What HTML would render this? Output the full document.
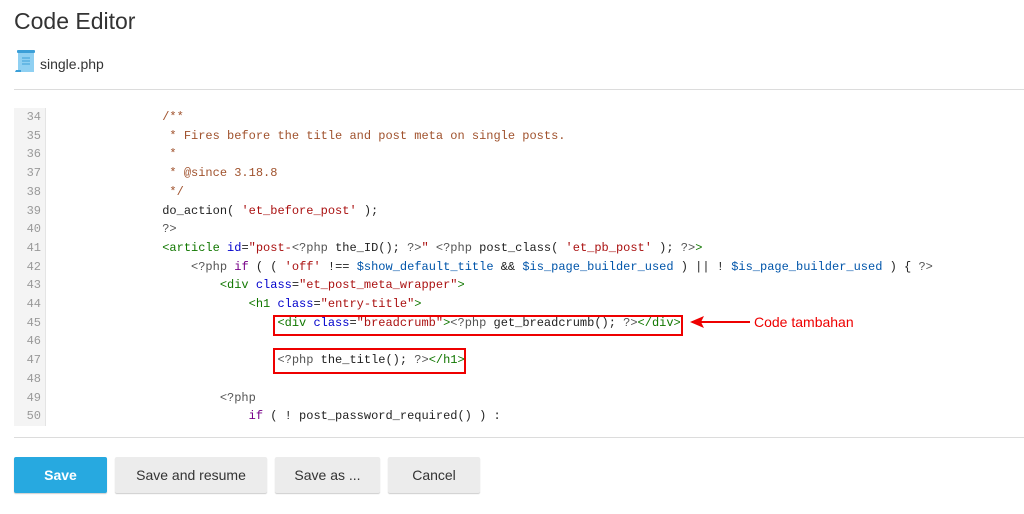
<!DOCTYPE html>
<html><head><meta charset="utf-8"><style>
body{margin:0;background:#fff;width:1024px;height:514px;overflow:hidden;font-family:"Liberation Sans",sans-serif;position:relative}
.t{position:absolute;left:14px;top:8px;font-size:23px;color:#333}
.f{position:absolute;left:40px;top:56px;font-size:14px;color:#333}
.hr{position:absolute;left:14px;width:1010px;height:1px;background:#dcdcdc}
.gut{position:absolute;left:14px;top:108px;width:31px;height:318px;background:#f4f4f4;border-right:1px solid #e4e4e4}
.code{position:absolute;left:0;top:108px;font-family:"Liberation Mono",monospace;font-size:12px;line-height:18.7px;white-space:pre;color:#222}
.ln{display:inline-block;width:41px;text-align:right;color:#999;padding-right:6px}
.c{color:#a0522d}.g{color:#170}.a{color:#00c}.s{color:#a11}.k{color:#708}.v{color:#05a}.m{color:#555}
.box{position:absolute;border:2px solid #e00}
.btn{position:absolute;top:457px;height:36px;line-height:36px;text-align:center;font-size:14px;border-radius:2px;background:#ececec;color:#333;box-shadow:0 1px 1px #ccc}
</style></head><body>
<div class="t">Code Editor</div>
<svg style="position:absolute;left:13px;top:49px" width="24" height="25" viewBox="0 0 24 25"><rect x="5" y="2" width="16" height="21" fill="#8fd0f2"/><rect x="4" y="1" width="18" height="3" rx="1" fill="#3b9fd8"/><path d="M2 23h6v-2H3z" fill="#3b9fd8"/><path d="M9 9h8M9 12h8M9 15h8" stroke="#3b9fd8" stroke-width="1"/></svg>
<div class="f">single.php</div>
<div class="hr" style="top:89px"></div>
<div class="gut"></div>
<div class="code"><span class="ln">34</span>                <span class="c">/**</span>
<span class="ln">35</span>                <span class="c"> * Fires before the title and post meta on single posts.</span>
<span class="ln">36</span>                <span class="c"> *</span>
<span class="ln">37</span>                <span class="c"> * @since 3.18.8</span>
<span class="ln">38</span>                <span class="c"> */</span>
<span class="ln">39</span>                do_action( <span class="s">'et_before_post'</span> );
<span class="ln">40</span>                <span class="m">?&gt;</span>
<span class="ln">41</span>                <span class="g">&lt;article</span> <span class="a">id</span>=<span class="s">"post-</span><span class="m">&lt;?php</span> the_ID(); <span class="m">?&gt;</span><span class="s">"</span> <span class="m">&lt;?php</span> post_class( <span class="s">'et_pb_post'</span> ); <span class="m">?&gt;</span><span class="g">&gt;</span>
<span class="ln">42</span>                    <span class="m">&lt;?php</span> <span class="k">if</span> ( ( <span class="s">'off'</span> !== <span class="v">$show_default_title</span> &amp;&amp; <span class="v">$is_page_builder_used</span> ) || ! <span class="v">$is_page_builder_used</span> ) { <span class="m">?&gt;</span>
<span class="ln">43</span>                        <span class="g">&lt;div</span> <span class="a">class</span>=<span class="s">"et_post_meta_wrapper"</span><span class="g">&gt;</span>
<span class="ln">44</span>                            <span class="g">&lt;h1</span> <span class="a">class</span>=<span class="s">"entry-title"</span><span class="g">&gt;</span>
<span class="ln">45</span>                                <span class="g">&lt;div</span> <span class="a">class</span>=<span class="s">"breadcrumb"</span><span class="g">&gt;</span><span class="m">&lt;?php</span> get_breadcrumb(); <span class="m">?&gt;</span><span class="g">&lt;/div&gt;</span>
<span class="ln">46</span>
<span class="ln">47</span>                                <span class="m">&lt;?php</span> the_title(); <span class="m">?&gt;</span><span class="g">&lt;/h1&gt;</span>
<span class="ln">48</span>
<span class="ln">49</span>                        <span class="m">&lt;?php</span>
<span class="ln">50</span>                            <span class="k">if</span> ( ! post_password_required() ) :</div>
<div class="box" style="left:273px;top:315px;width:406px;height:17px"></div>
<div class="box" style="left:273px;top:348px;width:189px;height:22px"></div>
<svg style="position:absolute;left:688px;top:314px" width="64" height="16"><path d="M4 8H62" stroke="#e00" stroke-width="2"/><path d="M2 8L16 2L13 8L16 14Z" fill="#e00"/></svg>
<div style="position:absolute;left:754px;top:314px;font-size:14px;color:#e00">Code tambahan</div>
<div class="hr" style="top:437px"></div>
<div class="btn" style="left:14px;width:93px;background:#27a9e0;color:#fff;font-weight:bold">Save</div>
<div class="btn" style="left:115px;width:152px">Save and resume</div>
<div class="btn" style="left:275px;width:105px">Save as ...</div>
<div class="btn" style="left:388px;width:92px">Cancel</div>
</body></html>
